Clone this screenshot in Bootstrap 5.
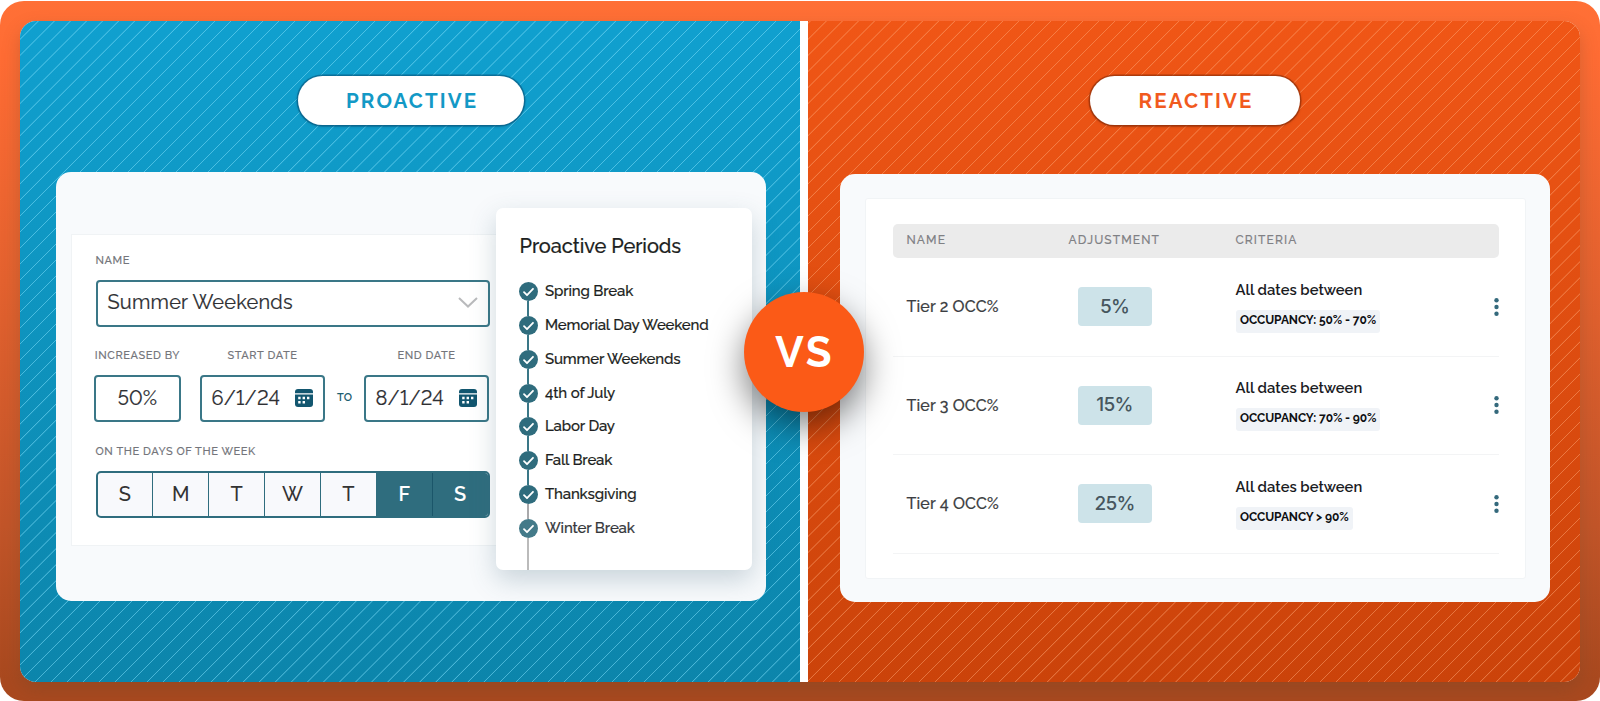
<!DOCTYPE html>
<html lang="en">
<head>
    <meta charset="UTF-8">
    <meta name="viewport" content="width=device-width, initial-scale=1.0">
    <title>Proactive vs Reactive</title>
    <link href="https://cdn.jsdelivr.net/npm/bootstrap@5.3.0/dist/css/bootstrap.min.css" rel="stylesheet">
    <style>
        body {
            font-family: Raleway, Lato, sans-serif;
            background: #fff;
            color: #333;
            width: 1600px;
            height: 701px;
            padding-top: 1px;
            overflow: hidden;
        }
        .frame {
            width: 1600px;
            height: 700px;
            padding: 20px;
            border-radius: 24px;
            background: linear-gradient(#ff7036 0%, #ff6c34 8%, #e4622f 40%, #c25529 75%, #a9491f 97%);
        }
        .arena {
            height: 660.5px;
            border-radius: 16px;
            background: #fff;
            box-shadow: 0 8px 18px rgba(110, 70, 40, .3);
        }
        .side {
            padding-top: 54.5px;
        }
        .side-proactive {
            width: 780px;
            padding-left: 36px;
            padding-right: 34px;
            border-radius: 16px 0 0 16px;
            background: repeating-linear-gradient(135deg, transparent 0 1.1px, rgba(125, 222, 250, .54) 1.5px 1.9px, transparent 2.3px 11.338px),
                linear-gradient(#10a0cf, #0c85ab);
        }
        .side-reactive {
            width: 772px;
            margin-left: 8px;
            padding-left: 32px;
            padding-right: 30px;
            border-radius: 0 16px 16px 0;
            background: repeating-linear-gradient(135deg, transparent 0 1.1px, rgba(255, 165, 115, .5) 1.5px 1.9px, transparent 2.3px 11.338px),
                linear-gradient(#f05616, #cb430a);
        }
        .tag-pill {
            height: 49px;
            padding-top: 3px;
            border-radius: 25px;
            font-size: 20.5px;
            font-weight: 700;
            letter-spacing: 2.1px;
            text-indent: 2px;
        }
        .pill-blue {
            width: 226px;
            margin-bottom: 47.5px;
            color: #1399c6;
            box-shadow: 0 0 0 1.5px rgba(10, 95, 135, .7), 0 1px 3px rgba(0, 50, 80, .5);
        }
        .pill-orange {
            width: 210px;
            margin-bottom: 49px;
            color: #f15a1e;
            box-shadow: 0 0 0 1.5px rgba(150, 50, 10, .7), 0 1px 3px rgba(80, 20, 0, .5);
        }
        .board {
            width: 710px;
            height: 428.5px;
            border-radius: 15px;
            background: #f8fafc;
        }

        /* form */
        .form-panel {
            width: 425px;
            height: 312.5px;
            margin: 61.5px 0 0 15px;
            padding: 19px 0 0 23.5px;
            background: #fff;
            border: 1px solid #f0f3f5;
            border-right: 0;
        }
        .caption {
            font-size: 11px;
            font-weight: 500;
            line-height: 14px;
            letter-spacing: .58px;
            margin-bottom: 12px;
            color: #74757b;
            white-space: nowrap;
            -webkit-text-stroke: .15px;
        }
        .box {
            height: 47px;
            padding-bottom: 2px;
            border: 2px solid #3a7787;
            border-radius: 4px;
            background: #fff;
            font-size: 20px;
            font-weight: 400;
            font-variant-numeric: lining-nums;
            letter-spacing: .22px;
            color: #2e2f33;
            -webkit-text-stroke: .2px;
        }
        .name-box {
            width: 394px;
            padding-left: 10px;
            padding-right: 10px;
        }
        .date-box {
            padding-left: 9.5px;
            padding-right: 10px;
        }
        .field-row {
            margin: 22.5px 0 22.5px -1.5px;
        }
        .to-word {
            width: 39px;
            height: 47px;
            font-size: 11px;
            font-weight: 600;
            color: #1f5f71;
        }
        .week {
            width: 394px;
            height: 47px;
            border: 2px solid #2f6d7e;
            border-radius: 5px;
            overflow: hidden;
            background: #f8f9fc;
            font-size: 20px;
            font-weight: 500;
            color: #333;
        }
        .week div + div {
            border-left: 1.6px solid #2f6d7e;
        }
        .week .on {
            background: #2f6d7e;
            color: #fff;
            font-weight: 600;
        }
        .week .on + .on {
            border-left-color: #1b566a;
        }

        /* periods */
        .periods {
            width: 256px;
            height: 362px;
            margin-top: 36px;
            padding: 26px 0 0 22.5px;
            border-radius: 7px;
            background: #fff;
            box-shadow: 0 10px 26px rgba(60, 100, 120, .25);
        }
        .periods h2 {
            font-size: 20px;
            font-weight: 500;
            line-height: 24px;
            letter-spacing: -.08px;
            margin: 0 0 24px 1px;
            color: #1d1f22;
            -webkit-text-stroke: .2px;
        }
        .periods li {
            height: 33.85px;
            font-size: 15px;
            font-weight: 500;
            line-height: 19px;
            letter-spacing: -.15px;
            color: #1d1f22;
            -webkit-text-stroke: .2px;
        }
        .periods svg {
            width: 19px;
            height: 19px;
        }
        .periods .rail {
            width: 19px;
            margin-right: 7.5px;
        }
        .periods .rail svg {
            display: block;
        }
        .periods .rail::after {
            content: "";
            display: block;
            width: 2px;
            height: 14.85px;
            margin: 0 auto;
            background: #3a7787;
        }
        .periods li.past .rail::after {
            background: #a9a9ab;
        }
        .periods li:last-child {
            color: #36383c;
        }
        .periods li:last-child .rail::after {
            height: 32px;
            background: #bbb;
        }

        /* versus badge */
        .versus {
            left: 724px;
            top: 271px;
            width: 120px;
            height: 120px;
            background: #fb5a17;
            color: #fff;
            font-size: 42px;
            font-weight: 700;
            letter-spacing: 3.2px;
            text-indent: 2px;
            box-shadow: 0 14px 34px rgba(0, 0, 0, .5);
        }

        /* tiers */
        .tiers {
            height: 381.5px;
            margin: 24px 24px 0 25px;
            padding: 25.5px 26px 0 27px;
            background: #fff;
            border: 1px solid #f1f4f6;
            border-radius: 3px;
        }
        .tier-grid {
            display: grid;
            grid-template-columns: 162px 167px 1fr 5px;
            align-items: center;
        }
        .tier-head {
            height: 34px;
            padding-left: 13.5px;
            padding-bottom: 2px;
            border-radius: 5px;
            background: #ebebeb;
            font-size: 12px;
            font-weight: 500;
            letter-spacing: 1.12px;
            color: #7f8084;
            -webkit-text-stroke: .15px;
        }
        .tier-line {
            height: 98.5px;
            padding-left: 13.5px;
            border-bottom: 1.5px solid #f3f4f5;
            color: #3c3e42;
            font-size: 16px;
            font-weight: 500;
            letter-spacing: .15px;
        }
        .tier-name {
            padding-top: 1px;
            -webkit-text-stroke: .2px;
        }
        .percent {
            width: 74px;
            height: 39px;
            margin-left: 9px;
            border-radius: 4px;
            background: #cde3e9;
            color: #46565e;
            font-family: Inter, sans-serif;
            font-size: 19px;
            font-weight: 500;
            letter-spacing: -.7px;
        }
        .dates {
            font-size: 14.8px;
            font-weight: 600;
            line-height: 18px;
            letter-spacing: 0;
            color: #1b1c1f;
        }
        .occupancy {
            display: inline-block;
            height: 23px;
            margin-top: 11px;
            padding: 1px 4px 0 4.5px;
            border-radius: 3px;
            background: #f0f3f7;
            color: #0e0f12;
            font-size: 12px;
            font-weight: 700;
            line-height: 18px;
            letter-spacing: -.08px;
        }
    </style>
</head>
<body>
    <svg class="d-none">
        <symbol id="check" viewBox="0 0 19 19">
            <circle cx="9.5" cy="9.5" r="9.5" fill="#2f6c7d"/>
            <path d="M5 10.2l3 3 6-6.4" fill="none" stroke="#fff" stroke-width="1.8" stroke-linecap="round" stroke-linejoin="round"/>
        </symbol>
        <symbol id="calendar" viewBox="0 0 18 18">
            <path d="M0 4.2V3a3 3 0 0 1 3-3h12a3 3 0 0 1 3 3v1.2z" fill="#12566f"/>
            <path d="M0 5.6h18V15a3 3 0 0 1-3 3H3a3 3 0 0 1-3-3z" fill="#12566f"/>
            <path d="M7.6 7.8H10v2.4H7.6zM12 7.8h2.4v2.4H12zM3.2 12H5.6v2.4H3.2zM7.6 12H10v2.4H7.6zM3.2 7.8h2.4v2.4H3.2z" fill="#fff"/>
        </symbol>
        <symbol id="dots" viewBox="0 0 5 20">
            <circle cx="2.5" cy="3.3" r="2.2" fill="#34697c"/>
            <circle cx="2.5" cy="10" r="2.2" fill="#34697c"/>
            <circle cx="2.5" cy="16.7" r="2.2" fill="#34697c"/>
        </symbol>
    </svg>

    <div class="frame">
        <div class="arena d-flex position-relative">
            <section class="side side-proactive">
                <div class="tag-pill pill-blue bg-white d-flex align-items-center justify-content-center mx-auto">PROACTIVE</div>
                <div class="board d-flex align-items-start">
                    <div class="form-panel">
                        <div class="caption">NAME</div>
                        <div class="box name-box d-flex align-items-center justify-content-between">
                            <span>Summer Weekends</span>
                            <svg width="20" height="11" viewBox="0 0 20 11"><path d="M1 1l9 8.5L19 1" fill="none" stroke="#b9babc" stroke-width="2"/></svg>
                        </div>
                        <div class="field-row d-flex align-items-end">
                            <div style="width:87px">
                                <div class="caption text-center">INCREASED BY</div>
                                <div class="box d-flex align-items-center justify-content-center">50%</div>
                            </div>
                            <div style="width:125px;margin-left:19px">
                                <div class="caption text-center">START DATE</div>
                                <div class="box date-box d-flex align-items-center justify-content-between">
                                    <span>6/1/24</span>
                                    <svg width="18" height="18"><use href="#calendar"/></svg>
                                </div>
                            </div>
                            <div class="to-word d-flex align-items-center justify-content-center">TO</div>
                            <div style="width:125px">
                                <div class="caption text-center">END DATE</div>
                                <div class="box date-box d-flex align-items-center justify-content-between">
                                    <span>8/1/24</span>
                                    <svg width="18" height="18"><use href="#calendar"/></svg>
                                </div>
                            </div>
                        </div>
                        <div class="caption">ON THE DAYS OF THE WEEK</div>
                        <div class="week row g-0 text-center">
                            <div class="col d-flex align-items-center justify-content-center">S</div>
                            <div class="col d-flex align-items-center justify-content-center">M</div>
                            <div class="col d-flex align-items-center justify-content-center">T</div>
                            <div class="col d-flex align-items-center justify-content-center">W</div>
                            <div class="col d-flex align-items-center justify-content-center">T</div>
                            <div class="col on d-flex align-items-center justify-content-center">F</div>
                            <div class="col on d-flex align-items-center justify-content-center">S</div>
                        </div>
                    </div>
                    <div class="periods position-relative">
                        <h2>Proactive Periods</h2>
                        <ul class="list-unstyled mb-0">
                            <li class="d-flex"><div class="rail"><svg><use href="#check"/></svg></div>Spring Break</li>
                            <li class="d-flex"><div class="rail"><svg><use href="#check"/></svg></div>Memorial Day Weekend</li>
                            <li class="d-flex"><div class="rail"><svg><use href="#check"/></svg></div>Summer Weekends</li>
                            <li class="d-flex"><div class="rail"><svg><use href="#check"/></svg></div>4th of July</li>
                            <li class="d-flex"><div class="rail"><svg><use href="#check"/></svg></div>Labor Day</li>
                            <li class="d-flex"><div class="rail"><svg><use href="#check"/></svg></div>Fall Break</li>
                            <li class="d-flex past"><div class="rail"><svg><use href="#check"/></svg></div>Thanksgiving</li>
                            <li class="d-flex"><div class="rail"><svg opacity=".9"><use href="#check"/></svg></div>Winter Break</li>
                        </ul>
                    </div>
                </div>
            </section>

            <section class="side side-reactive">
                <div class="tag-pill pill-orange bg-white d-flex align-items-center justify-content-center mx-auto">REACTIVE</div>
                <div class="board overflow-hidden">
                    <div class="tiers">
                        <div class="tier-head tier-grid">
                            <span>NAME</span><span>ADJUSTMENT</span><span>CRITERIA</span>
                        </div>
                        <div class="tier-line tier-grid">
                            <span class="tier-name">Tier 2 OCC%</span>
                            <span class="percent d-flex align-items-center justify-content-center">5%</span>
                            <div>
                                <div class="dates">All dates between</div>
                                <span class="occupancy">OCCUPANCY: 50% - 70%</span>
                            </div>
                            <svg width="5" height="20"><use href="#dots"/></svg>
                        </div>
                        <div class="tier-line tier-grid">
                            <span class="tier-name">Tier 3 OCC%</span>
                            <span class="percent d-flex align-items-center justify-content-center">15%</span>
                            <div>
                                <div class="dates">All dates between</div>
                                <span class="occupancy">OCCUPANCY: 70% - 90%</span>
                            </div>
                            <svg width="5" height="20"><use href="#dots"/></svg>
                        </div>
                        <div class="tier-line tier-grid">
                            <span class="tier-name">Tier 4 OCC%</span>
                            <span class="percent d-flex align-items-center justify-content-center">25%</span>
                            <div>
                                <div class="dates">All dates between</div>
                                <span class="occupancy">OCCUPANCY &gt; 90%</span>
                            </div>
                            <svg width="5" height="20"><use href="#dots"/></svg>
                        </div>
                    </div>
                </div>
            </section>

            <div class="versus position-absolute rounded-circle d-flex align-items-center justify-content-center">VS</div>
        </div>
    </div>
    <script src="https://cdn.jsdelivr.net/npm/bootstrap@5.3.0/dist/js/bootstrap.bundle.min.js"></script>
</body>
</html>
